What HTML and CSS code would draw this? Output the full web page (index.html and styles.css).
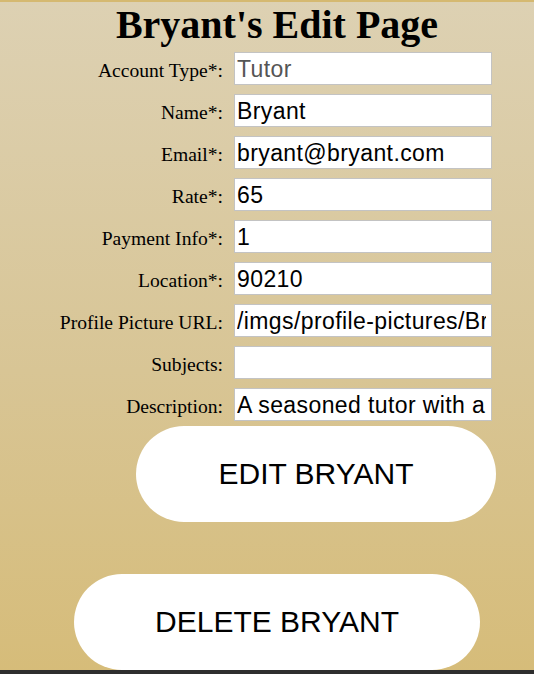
FILE: index.html
```html
<!DOCTYPE html>
<html lang="en">
<head>
<meta charset="utf-8">
<title>Bryant's Edit Page</title>
<link rel="stylesheet" href="styles.css">
</head>
<body>
<div class="page">
  <h1 class="title">Bryant's Edit Page</h1>
  <form class="edit-form">
    <label class="field-label" for="acct">Account Type*:</label>
    <input id="acct" class="field-input field-input--readonly" type="text" value="Tutor" readonly>
    <label class="field-label" for="name">Name*:</label>
    <input id="name" class="field-input" type="text" value="Bryant">
    <label class="field-label" for="email">Email*:</label>
    <input id="email" class="field-input" type="text" value="bryant@bryant.com">
    <label class="field-label" for="rate">Rate*:</label>
    <input id="rate" class="field-input" type="text" value="65">
    <label class="field-label" for="pay">Payment Info*:</label>
    <input id="pay" class="field-input" type="text" value="1">
    <label class="field-label" for="loc">Location*:</label>
    <input id="loc" class="field-input" type="text" value="90210">
    <label class="field-label" for="pic">Profile Picture URL:</label>
    <input id="pic" class="field-input" type="text" value="/imgs/profile-pictures/Bryant.jpg">
    <label class="field-label" for="subj">Subjects:</label>
    <input id="subj" class="field-input" type="text" value="">
    <label class="field-label" for="desc">Description:</label>
    <input id="desc" class="field-input" type="text" value="A seasoned tutor with a passion for teaching">
  </form>
  <div class="actions">
    <button class="pill-btn pill-btn--edit" type="button">EDIT BRYANT</button>
    <button class="pill-btn pill-btn--delete" type="button">DELETE BRYANT</button>
  </div>
</div>
<div class="bottom-bar"></div>
</body>
</html>
```

FILE: styles.css
```css
html, body {
  margin: 0;
  padding: 0;
  height: 674px;
  overflow: hidden;
}

body {
  background: linear-gradient(to bottom, #ddd1b3 0%, #d8c595 55%, #d6bc79 100%);
  font-family: "Liberation Serif", "Times New Roman", serif;
  color: #000;
  display: flex;
  flex-direction: column;
}

.page {
  border-top: 2px solid #d5b971;
  display: flex;
  flex-direction: column;
  align-items: stretch;
}

.title {
  margin: 3px 0 0 0;
  padding-left: 20px;
  font-size: 40px;
  line-height: 40px;
  font-weight: bold;
  text-align: center;
}

.edit-form {
  margin-top: 7px;
  display: grid;
  grid-template-columns: 1fr 258px;
  column-gap: 11px;
  row-gap: 9px;
  padding-right: 42px;
  align-items: baseline;
}

.field-label {
  text-align: right;
  font-size: 19.6px;
  white-space: nowrap;
}

.field-input {
  box-sizing: border-box;
  width: 258px;
  height: 33px;
  margin: 0;
  padding: 1px 5px 0 2px;
  border: 1px solid #c3c3c3;
  background: #fff;
  font-family: "Liberation Sans", Arial, sans-serif;
  font-size: 23px;
  letter-spacing: 0.4px;
  color: #000;
  outline: none;
}

.field-input--readonly {
  color: #555;
}

.actions {
  display: flex;
  flex-direction: column;
  align-items: flex-start;
}

.pill-btn {
  height: 96px;
  border: none;
  border-radius: 48px;
  background: #fff;
  color: #000;
  font-family: "Liberation Sans", Arial, sans-serif;
  font-size: 30px;
  padding: 0;
  cursor: pointer;
}

.pill-btn--edit {
  margin-top: 5px;
  margin-left: 136px;
  width: 360px;
}

.pill-btn--delete {
  margin-top: 52px;
  margin-left: 74px;
  width: 406px;
}

.bottom-bar {
  flex: 1 0 auto;
  min-height: 4px;
  background: #2e2e2e;
}
```
